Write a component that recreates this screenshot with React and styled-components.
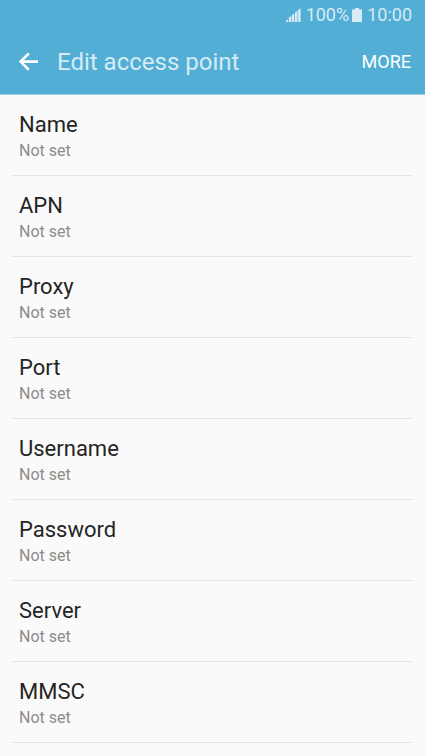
import React from 'react';
import styled, { createGlobalStyle, ThemeProvider } from 'styled-components';

const theme = {
  BLUE: '#52aed5',
  BLUE_LIGHT: '#d6ebf4',
  WHITE: '#ffffff',
  BACKGROUND: '#fafafa',
  BLACK: '#252525',
  GRAY: '#8b8b8b',
  LINE: '#e6e6e6',
};

const FIELDS = [
  'Name',
  'APN',
  'Proxy',
  'Port',
  'Username',
  'Password',
  'Server',
  'MMSC',
];

function SignalIcon() {
  return (
    <svg width="15" height="14" viewBox="0 0 15 14" fill="currentColor" aria-hidden="true">
      <path d="M0 14v-1l2-2v3zM2.8 14v-4.2l2.4-2V14zM5.9 14V7.2l2.4-2V14zM9 14V4.6l2.4-2.2V14zM12.1 14V2L14.6 0v14z" />
    </svg>
  );
}

function BatteryIcon() {
  return (
    <svg width="10" height="14" viewBox="0 0 10 14" fill="currentColor" aria-hidden="true">
      <path d="M3 0h4v1.4h3V14H0V1.4h3z" />
    </svg>
  );
}

function BackIcon() {
  return (
    <svg width="20" height="20" viewBox="0 0 20 20" fill="none" stroke="currentColor" strokeWidth="2.6" aria-hidden="true">
      <path d="M10.8 1.4L2.6 9.6l8.2 8.2M2.2 9.6H20" />
    </svg>
  );
}

function App() {
  return (
    <ThemeProvider theme={theme}>
      <GlobalStyle />
      <Header>
        <StatusBar>
          <SignalIcon />
          <Battery>
            100%
            <BatteryIcon />
          </Battery>
          <span>10:00</span>
        </StatusBar>
        <ActionBar>
          <BackButton type="button" aria-label="Back">
            <BackIcon />
          </BackButton>
          <Title>Edit access point</Title>
          <MoreButton type="button">MORE</MoreButton>
        </ActionBar>
      </Header>
      <FieldList>
        {FIELDS.map((name) => (
          <FieldItem key={name}>
            <FieldButton type="button">
              <FieldName>{name}</FieldName>
              <FieldValue>Not set</FieldValue>
            </FieldButton>
          </FieldItem>
        ))}
      </FieldList>
    </ThemeProvider>
  );
}

const GlobalStyle = createGlobalStyle`
  * {
    box-sizing: border-box;
  }

  body {
    margin: 0;
    background-color: ${({ theme }) => theme.BACKGROUND};
    font-family: Roboto, 'Noto Sans', sans-serif;
  }

  button {
    padding: 0;
    border: 0;
    background: none;
    color: inherit;
    font: inherit;
    cursor: pointer;
  }
`;

const Header = styled.header`
  background-color: ${({ theme }) => theme.BLUE};
  color: ${({ theme }) => theme.BLUE_LIGHT};
  border-bottom: 1px solid #a5d0e2;
`;

const StatusBar = styled.div`
  display: flex;
  align-items: center;
  justify-content: flex-end;
  column-gap: 5px;
  height: 30px;
  padding-right: 13px;
  font-size: 18px;
  line-height: 30px;
`;

const Battery = styled.span`
  display: flex;
  align-items: center;
  column-gap: 3px;
`;

const ActionBar = styled.div`
  display: flex;
  align-items: center;
  height: 64px;
  padding: 0 14px 0 18px;
`;

const BackButton = styled.button`
  display: flex;
  width: 39px;
  color: ${({ theme }) => theme.WHITE};
`;

const Title = styled.h1`
  flex: 1;
  margin: 0;
  font-size: 24px;
  font-weight: 400;
  line-height: 32px;
`;

const MoreButton = styled.button`
  color: ${({ theme }) => theme.WHITE};
  font-size: 18px;
  line-height: 32px;
`;

const FieldList = styled.ul`
  margin: 0;
  padding: 0 12px;
  list-style: none;
`;

const FieldItem = styled.li`
  border-bottom: 1px solid ${({ theme }) => theme.LINE};
`;

const FieldButton = styled.button`
  display: flex;
  flex-direction: column;
  width: 100%;
  padding: 14px 7px;
  text-align: left;
`;

const FieldName = styled.span`
  color: ${({ theme }) => theme.BLACK};
  font-size: 22px;
  line-height: 32px;
`;

const FieldValue = styled.span`
  color: ${({ theme }) => theme.GRAY};
  font-size: 16px;
  line-height: 20px;
`;

export default App;
